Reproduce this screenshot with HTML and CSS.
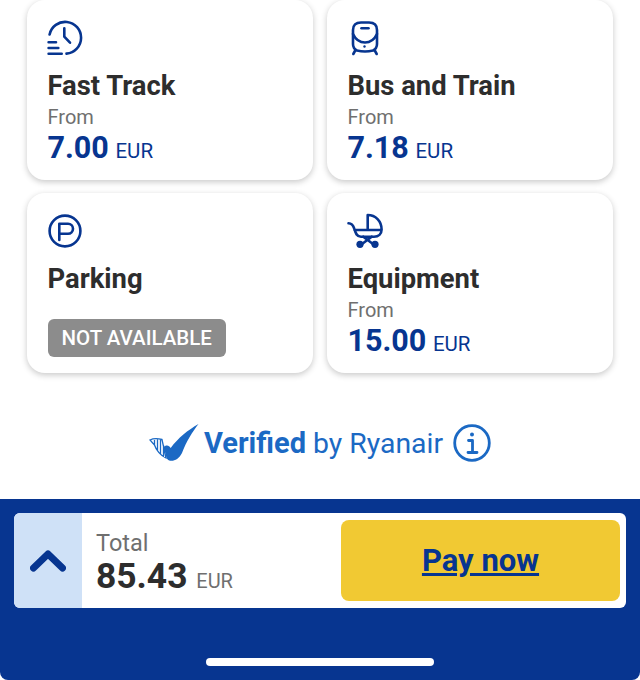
FILE: index.html
```html
<!DOCTYPE html>
<html lang="en">
<head>
    <meta charset="UTF-8">
    <meta name="viewport" content="width=device-width, initial-scale=1.0">
    <title>Payment extras</title>
    <link rel="stylesheet" href="styles.css">
</head>
<body>
    <div class="extras">
        <!-- Fast Track -->
        <div class="card">
            <svg class="icon" viewBox="0 0 36 36">
                <path d="M2.6 14.5A15.9 15.9 0 1 1 19.5 33.6"/>
                <path d="M17.3 8.3V16.7L23 22.7"/>
                <path d="M1.6 22.3H9M1.6 28H11.3M1.6 33.7H14.7"/>
            </svg>
            <h2>Fast Track</h2>
            <div class="from">From</div>
            <div class="price">7.00 <span>EUR</span></div>
        </div>

        <!-- Bus and Train -->
        <div class="card">
            <svg class="icon" viewBox="0 0 36 36">
                <path d="M10 30.5Q6 28.5 6 24V10Q6 2.5 14 2.5H22Q30 2.5 30 10V24Q30 28.5 26 30.5Q18 32.5 10 30.5Z"/>
                <path d="M6 14Q10 22.5 18 22.5Q26 22.5 30 14"/>
                <path d="M14.5 8.3H21.5"/>
                <path d="M8.5 30L6.3 34M27.5 30L29.7 34"/>
                <circle class="solid" cx="17.5" cy="26.5" r="1.2"/>
            </svg>
            <h2>Bus and Train</h2>
            <div class="from">From</div>
            <div class="price">7.18 <span>EUR</span></div>
        </div>

        <!-- Parking -->
        <div class="card">
            <svg class="icon" viewBox="0 0 36 36">
                <circle cx="18" cy="18" r="15.4"/>
                <path d="M12.3 27V10.8H21A5 5 0 0 1 21 20.8H12.3"/>
            </svg>
            <h2>Parking</h2>
            <div class="badge">NOT AVAILABLE</div>
        </div>

        <!-- Equipment -->
        <div class="card">
            <svg class="icon" viewBox="0 0 36 36">
                <path d="M1.5 10.3C5 10.5 6 12 7 15C8.5 20.5 10 23.7 14 23.7H27C31.5 23.7 34.6 21 34.6 16.5C34.6 8 28.5 2 20.7 2V17M7.5 17H34.6"/>
                <path d="M16.3 23.7L26 31M24.7 23.7L15 31"/>
                <circle class="solid" cx="13" cy="31.3" r="3.6"/>
                <circle class="solid" cx="28" cy="31.3" r="3.6"/>
            </svg>
            <h2>Equipment</h2>
            <div class="from">From</div>
            <div class="price">15.00 <span>EUR</span></div>
        </div>
    </div>

    <div class="verified">
        <svg class="logo" viewBox="0 0 52 40">
            <path class="harp" d="M2 17C6 15 10 15.500 14 16.500L18 35C13 33 8 27 6.500 22L2 17ZM6.500 17V22M9.500 16.500V27M12.500 16.500V31M15.500 22V34"/>
            <path class="check" d="M15 24.500C18 21.500 21 22 22.700 25C30 15 40 7 50.500 1C45 8 38 19 34 30C31 36 26 38.500 22 37.700C19 37 18.500 35 18 33C17.500 30 16.500 27 15 24.500Z"/>
        </svg>
        <span class="verified-text"><b>Verified</b> by Ryanair</span>
        <svg class="info" viewBox="0 0 38 38">
            <circle cx="19" cy="19" r="17.300"/>
            <path d="M15.500 16.500H19.500V28M15 28.500H24"/>
            <circle class="dot" cx="19" cy="10.500" r="2"/>
        </svg>
    </div>

    <div class="footer">
        <div class="summary">
            <div class="toggle">
                <svg class="chevron" viewBox="0 0 36 22">
                    <path d="M3.500 18L18 4L32.500 18"/>
                </svg>
            </div>
            <div class="total">
                <div class="total-label">Total</div>
                <div class="total-price">85.43 <span>EUR</span></div>
            </div>
            <a class="pay" href="#">Pay now</a>
        </div>
        <div class="home-bar"></div>
    </div>
</body>
</html>
```

FILE: styles.css
```css
body {
    margin: 0;
    height: 680px;
    overflow: hidden;
    display: flex;
    flex-direction: column;
    background-color: white;
    font-family: Roboto, "Liberation Sans", sans-serif;
}
.extras {
    display: grid;
    grid-template-columns: 286px 286px;
    grid-auto-rows: 180px;
    gap: 13px 14px;
    padding: 0 27px;
}
.card {
    box-sizing: border-box;
    padding: 20px 20.5px 0 20.5px;
    background-color: white;
    border-radius: 18px;
    box-shadow: 0 2px 6px rgba(0,0,0,0.22);
}
.icon {
    display: block;
    width: 36px;
    height: 36px;
    margin-left: -0.5px;
    fill: none;
    stroke: #073590;
    stroke-width: 2.6;
    stroke-linecap: round;
    stroke-linejoin: round;
}
.icon .solid {
    fill: #073590;
    stroke: none;
}
.card h2 {
    margin: 13px 0 0 0;
    font-size: 27.4px;
    line-height: 34px;
    font-weight: 700;
    color: #2d2d2d;
}
.from {
    margin-top: 2px;
    font-size: 20px;
    line-height: 24px;
    color: #6f6f6f;
}
.price {
    margin-top: 1px;
    font-size: 30.5px;
    line-height: 36px;
    font-weight: 700;
    color: #073590;
}
.price span {
    margin-left: -1px;
    font-size: 20.5px;
    font-weight: 400;
}
.badge {
    display: inline-block;
    margin-top: 23px;
    padding: 0 14px;
    height: 38px;
    line-height: 38px;
    font-size: 20.5px;
    font-weight: 500;
    color: white;
    background-color: #8c8c8c;
    border-radius: 6px;
}
.verified {
    display: flex;
    align-items: center;
    justify-content: flex-start;
    margin: 50px 0 0 148px;
    height: 40px;
}
.logo {
    width: 52px;
    height: 40px;
}
.logo .harp {
    fill: none;
    stroke: #1b69c4;
    stroke-width: 1.3;
}
.logo .check {
    fill: #1b69c4;
}
.verified-text {
    margin-left: 4px;
    font-size: 28.4px;
    color: #1b69c4;
}
.verified-text b {
    font-size: 29px;
}
.info {
    width: 38px;
    height: 38px;
    margin-left: 10px;
    fill: none;
    stroke: #1b69c4;
    stroke-width: 2.8;
    stroke-linecap: round;
    stroke-linejoin: round;
}
.info .dot {
    fill: #1b69c4;
    stroke: none;
}
.footer {
    box-sizing: border-box;
    margin-top: auto;
    height: 181px;
    padding: 14px 14px 0 14px;
    background-color: #073590;
    border-radius: 0 0 8px 8px;
}
.summary {
    display: flex;
    align-items: stretch;
    height: 95px;
    background-color: white;
    border-radius: 6px;
    overflow: hidden;
}
.toggle {
    display: flex;
    align-items: center;
    justify-content: center;
    width: 68px;
    background-color: #cfe1f7;
}
.chevron {
    width: 36px;
    height: 22px;
    fill: none;
    stroke: #073590;
    stroke-width: 7;
    stroke-linecap: round;
    stroke-linejoin: round;
}
.total {
    flex: 1;
    padding: 16px 0 0 14px;
}
.total-label {
    font-size: 23.5px;
    line-height: 28px;
    color: #6f6f6f;
}
.total-price {
    font-size: 35.4px;
    line-height: 38px;
    font-weight: 700;
    color: #2d2d2d;
}
.total-price span {
    font-size: 20px;
    font-weight: 400;
    color: #6f6f6f;
}
.pay {
    display: flex;
    align-items: center;
    justify-content: center;
    width: 279px;
    margin: 7px 6px 7px 0;
    font-size: 31px;
    font-weight: 700;
    color: #073590;
    background-color: #f1c933;
    border-radius: 8px;
}
.home-bar {
    width: 228px;
    height: 8px;
    margin: 50px auto 0 auto;
    background-color: white;
    border-radius: 4px;
}
```
